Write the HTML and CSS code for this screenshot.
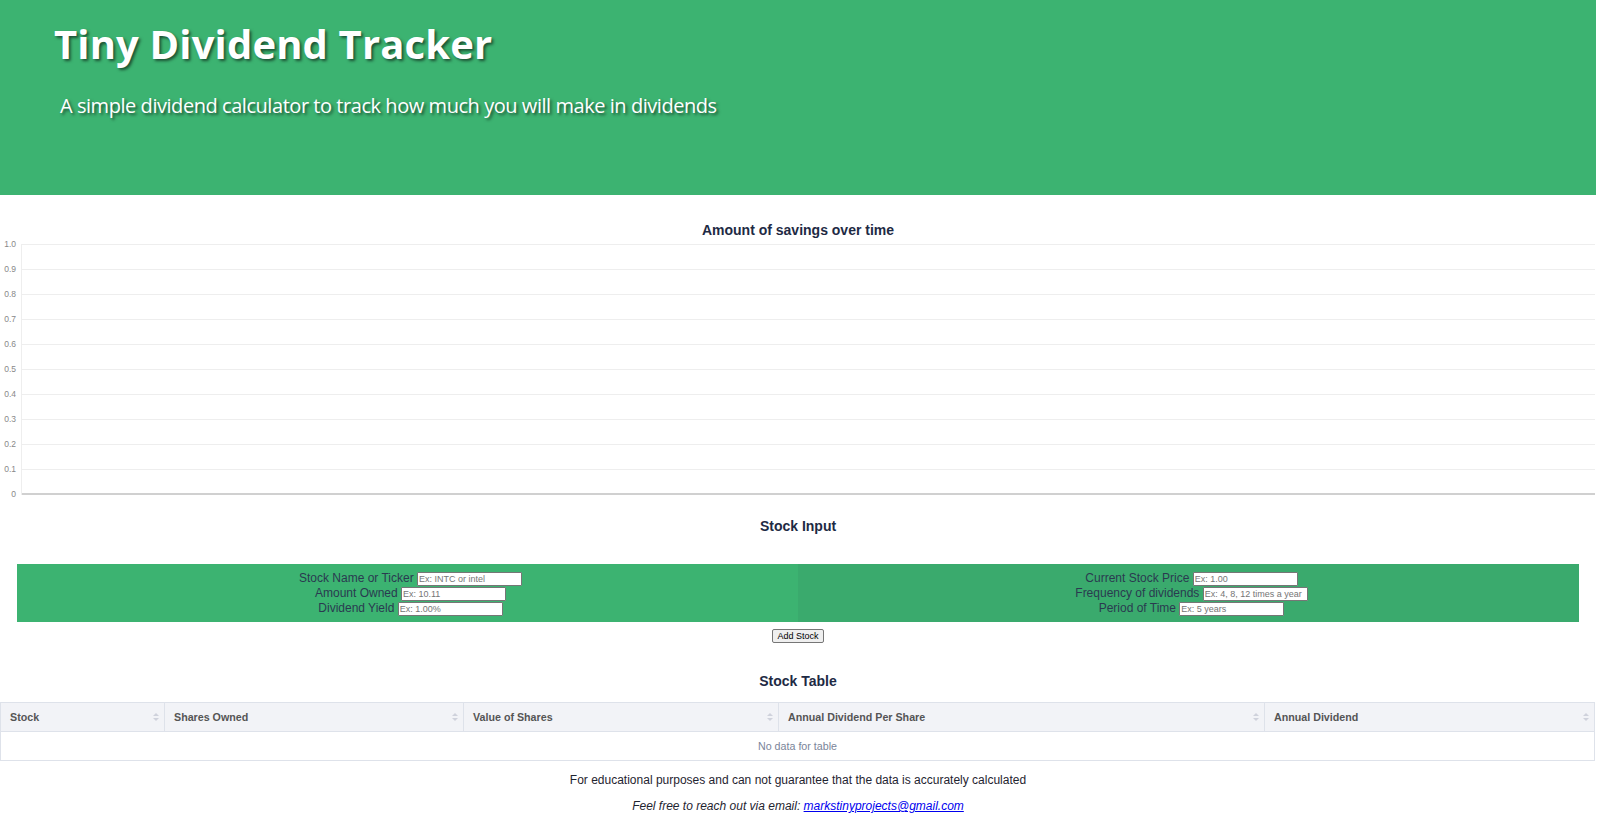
FILE: index.html
```html
<!DOCTYPE html>
<html lang="en">
<head>
  <meta charset="UTF-8" />
  <title>Tiny Dividend Tracker</title>
  <link rel="stylesheet" href="styles.css">
</head>
<body>
  <header class="banner">
    <h1>Tiny Dividend Tracker</h1>
    <p>A simple dividend calculator to track how much you will make in dividends</p>
  </header>

  <section class="chart">
    <h2 class="chart-title">Amount of savings over time</h2>
    <div class="plot">
      <div class="y-row"><span>1.0</span><i></i></div>
      <div class="y-row"><span>0.9</span><i></i></div>
      <div class="y-row"><span>0.8</span><i></i></div>
      <div class="y-row"><span>0.7</span><i></i></div>
      <div class="y-row"><span>0.6</span><i></i></div>
      <div class="y-row"><span>0.5</span><i></i></div>
      <div class="y-row"><span>0.4</span><i></i></div>
      <div class="y-row"><span>0.3</span><i></i></div>
      <div class="y-row"><span>0.2</span><i></i></div>
      <div class="y-row"><span>0.1</span><i></i></div>
      <div class="y-row y-zero"><span>0</span><i></i></div>
    </div>
  </section>

  <h2 class="section-title input-title">Stock Input</h2>
  <form class="stock-form">
    <div class="form-col">
      <div class="field">Stock Name or Ticker <input type="text" placeholder="Ex: INTC or intel"></div>
      <div class="field">Amount Owned <input type="text" placeholder="Ex: 10.11"></div>
      <div class="field">Dividend Yield <input type="text" placeholder="Ex: 1.00%"></div>
    </div>
    <div class="form-col form-col-dark">
      <div class="field">Current Stock Price <input type="text" placeholder="Ex: 1.00"></div>
      <div class="field">Frequency of dividends <input type="text" placeholder="Ex: 4, 8, 12 times a year"></div>
      <div class="field">Period of Time <input type="text" placeholder="Ex: 5 years"></div>
    </div>
  </form>
  <div class="form-actions"><button type="button">Add Stock</button></div>

  <h2 class="section-title table-title">Stock Table</h2>
  <table class="stock-table">
    <thead>
      <tr>
        <th class="col-stock">Stock<span class="sort"></span></th>
        <th class="col-shares">Shares Owned<span class="sort"></span></th>
        <th class="col-value">Value of Shares<span class="sort"></span></th>
        <th class="col-per">Annual Dividend Per Share<span class="sort"></span></th>
        <th>Annual Dividend<span class="sort"></span></th>
      </tr>
    </thead>
    <tbody>
      <tr><td colspan="5">No data for table</td></tr>
    </tbody>
  </table>

  <footer class="notes">
    <p>For educational purposes and can not guarantee that the data is accurately calculated</p>
    <p><em>Feel free to reach out via email: <a href="#">markstinyprojects@gmail.com</a></em></p>
  </footer>
</body>
</html>
```
FILE: styles.css
```css
html {
  overflow: hidden;
}

body {
  margin: 0;
  width: 1596px;
  height: 816px;
  overflow: hidden;
  background: #fff;
  color: #1f2937;
  font-family: 'Liberation Sans', Arial, sans-serif;
  text-align: center;
}

.banner {
  height: 195px;
  box-sizing: border-box;
  padding: 18px 0 0 54px;
  background: #3cb371;
  color: #fff;
  text-align: left;
  font-family: 'Open Sans', Tahoma, sans-serif;
  text-shadow: 2px 2px 3px rgba(0, 0, 0, 0.55);
}

.banner h1 {
  margin: 0;
  font-size: 40px;
  line-height: 52px;
  font-weight: 700;
  letter-spacing: 0.15px;
}

.banner p {
  margin: 22px 0 0 6px;
  font-size: 20px;
  line-height: 27px;
  letter-spacing: -0.45px;
}

.chart {
  padding-top: 27px;
}

.chart-title,
.section-title {
  margin: 0;
  font-size: 14px;
  line-height: 16px;
  font-weight: 700;
  color: #1e2a44;
}

.plot {
  margin: 6px 1px 0 21px;
  height: 251px;
  display: flex;
  flex-direction: column;
  justify-content: space-between;
  border-left: 1px solid #eee;
  position: relative;
}

.y-row {
  height: 1px;
  position: relative;
}

.y-row i {
  display: block;
  height: 1px;
  background: #eee;
}

.y-row span {
  position: absolute;
  right: 100%;
  top: -5px;
  margin-right: 6px;
  font-size: 8.5px;
  line-height: 10px;
  color: #888;
}

.y-zero i {
  height: 2px;
  margin-top: -1px;
  background: #d0d0d0;
}

.input-title {
  margin-top: 23px;
}

.stock-form {
  display: flex;
  margin: 30px 17px 0 17px;
  height: 58px;
}

.form-col {
  flex: 1;
  background: #3cb371;
  padding-top: 7px;
  box-sizing: border-box;
  color: #2a3a50;
  font-size: 12px;
}

.form-col-dark {
  background: #3aaa6d;
}

.field {
  height: 15px;
  line-height: 15px;
  padding-left: 6px;
}

.field input {
  width: 105px;
  height: 14px;
  box-sizing: border-box;
  padding: 0 1px;
  border: 1px solid #767676;
  border-radius: 1px;
  font: 9px 'Liberation Sans', Arial, sans-serif;
  vertical-align: top;
  margin-top: 1px;
}

.form-actions {
  margin-top: 7px;
  height: 16px;
}

.form-actions button {
  display: block;
  margin: 0 auto;
  width: 52px;
  height: 14px;
  padding: 0;
  border: 1px solid #767676;
  border-radius: 2px;
  background: #efefef;
  color: #000;
  font: 9px 'Liberation Sans', Arial, sans-serif;
}

.table-title {
  margin-top: 28px;
}

.stock-table {
  margin-top: 13px;
  width: 1595px;
  table-layout: fixed;
  border-collapse: collapse;
  font-size: 10.7px;
}

.stock-table th,
.stock-table td {
  box-sizing: border-box;
  border: 1px solid #dee2ea;
  height: 29px;
  padding: 0;
}

.stock-table th {
  position: relative;
  padding-left: 9px;
  background: #f2f3f7;
  color: #555;
  text-align: left;
  font-weight: 700;
}

.col-stock { width: 164px; }
.col-shares { width: 299px; }
.col-value { width: 315px; }
.col-per { width: 486px; }

.sort {
  position: absolute;
  right: 5px;
  top: 50%;
  margin-top: -4px;
  width: 6px;
  height: 8px;
}

.sort::before,
.sort::after {
  content: "";
  position: absolute;
  left: 0;
  border-left: 3px solid transparent;
  border-right: 3px solid transparent;
}

.sort::before {
  top: 0;
  border-bottom: 3px solid #cfd2dc;
}

.sort::after {
  bottom: 0;
  border-top: 3px solid #cfd2dc;
}

.stock-table td {
  color: #7a8499;
  text-align: center;
}

.notes {
  font-size: 12px;
  color: #1f2430;
}

.notes p {
  margin: 12px 0 0;
  line-height: 14px;
}

.notes a {
  color: #0000ee;
}
```
